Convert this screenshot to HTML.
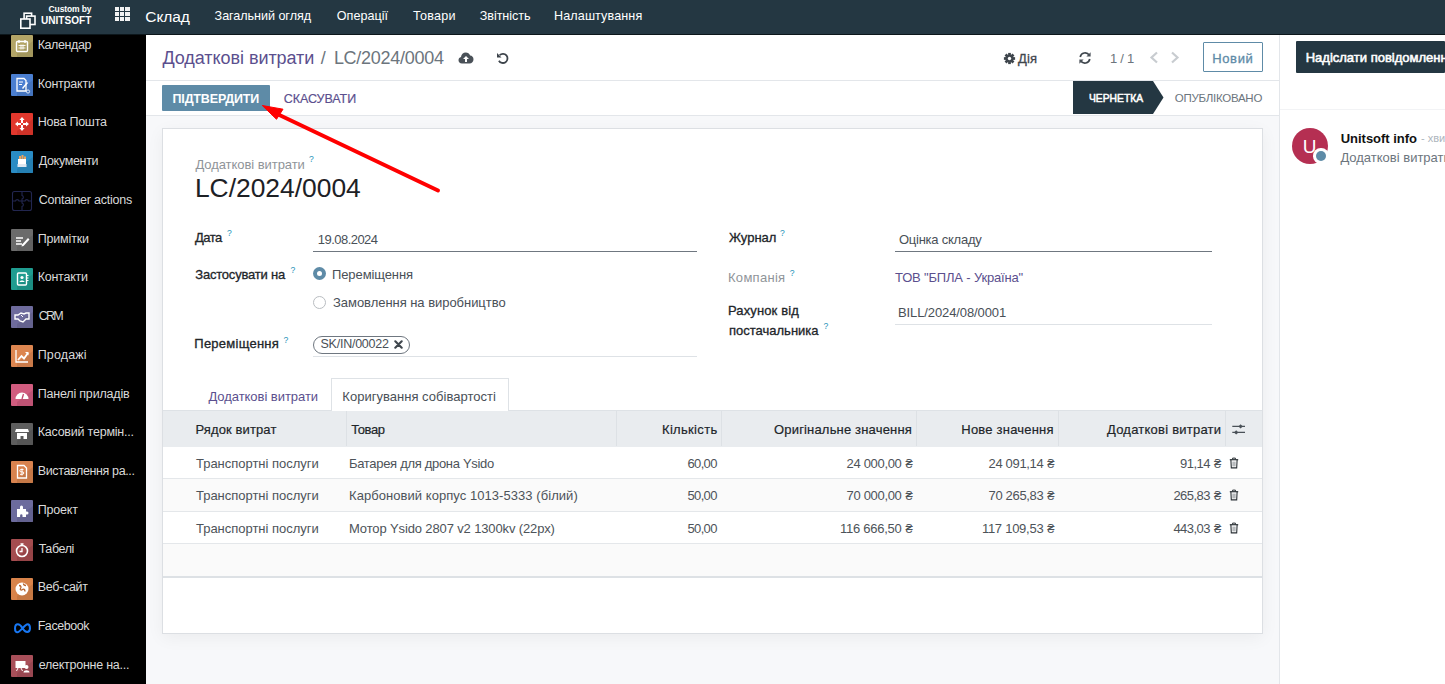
<!DOCTYPE html>
<html><head><meta charset="utf-8"><title>Odoo</title>
<style>
html,body{margin:0;padding:0;}
body{width:1445px;height:684px;overflow:hidden;position:relative;background:#fff;font-family:"Liberation Sans",sans-serif;}
body>div,body>svg{position:absolute;}
.t{white-space:pre;}
</style></head><body>
<div style="left:0px;top:0px;width:1445px;height:34px;background:#243742"></div>
<div style="left:0px;top:34px;width:1445px;height:1px;background:#0c161b"></div>
<div style="left:0px;top:35px;width:146px;height:649px;background:#000"></div>
<div style="left:146px;top:35px;width:1133px;height:81px;background:#fff"></div>
<div style="left:146px;top:80px;width:1133px;height:1px;background:#e3e6ea"></div>
<div style="left:146px;top:115px;width:1133px;height:1px;background:#e3e6ea"></div>
<div style="left:146px;top:116px;width:1133px;height:568px;background:#f7f8fa"></div>
<div style="left:1279px;top:35px;width:1px;height:649px;background:#e3e6ea"></div>
<div style="left:1280px;top:35px;width:165px;height:649px;background:#fff"></div>
<svg style="left:18px;top:10px" width="22" height="22" viewBox="0 0 22 22" fill="#243742" stroke="#fff" stroke-width="1.6"><rect x="6.1" y="3.2" width="7.5" height="7.1"/><rect x="8.6" y="6.1" width="8.4" height="8.4"/><rect x="2.8" y="9" width="9.2" height="9.2"/></svg>
<div class="t" style="left:48.60px;top:4.60px;font-size:8.50px;line-height:8.50px;color:#fff;font-weight:700;letter-spacing:-0.124px;">Custom by</div>
<div class="t" style="left:40.70px;top:15.07px;font-size:11.50px;line-height:11.50px;color:#fff;font-weight:700;transform:scaleX(0.8752);transform-origin:0 0;">UNITSOFT</div>
<div style="left:115.0px;top:7px;width:4.2px;height:4px;background:#f2f2f2"></div>
<div style="left:120.2px;top:7px;width:4.2px;height:4px;background:#f2f2f2"></div>
<div style="left:125.4px;top:7px;width:4.2px;height:4px;background:#f2f2f2"></div>
<div style="left:115.0px;top:12px;width:4.2px;height:4px;background:#f2f2f2"></div>
<div style="left:120.2px;top:12px;width:4.2px;height:4px;background:#f2f2f2"></div>
<div style="left:125.4px;top:12px;width:4.2px;height:4px;background:#f2f2f2"></div>
<div style="left:115.0px;top:17px;width:4.2px;height:4px;background:#f2f2f2"></div>
<div style="left:120.2px;top:17px;width:4.2px;height:4px;background:#f2f2f2"></div>
<div style="left:125.4px;top:17px;width:4.2px;height:4px;background:#f2f2f2"></div>
<div class="t" style="left:145.30px;top:8.68px;font-size:15.50px;line-height:15.50px;color:#fff;letter-spacing:-0.103px;">Склад</div>
<div class="t" style="left:214.60px;top:10.13px;font-size:12.60px;line-height:12.60px;color:#fff;letter-spacing:-0.054px;">Загальний огляд</div>
<div class="t" style="left:336.70px;top:10.13px;font-size:12.60px;line-height:12.60px;color:#fff;letter-spacing:0.037px;">Операції</div>
<div class="t" style="left:413.00px;top:10.13px;font-size:12.60px;line-height:12.60px;color:#fff;letter-spacing:0.226px;">Товари</div>
<div class="t" style="left:479.70px;top:10.13px;font-size:12.60px;line-height:12.60px;color:#fff;letter-spacing:-0.048px;">Звітність</div>
<div class="t" style="left:554.00px;top:10.13px;font-size:12.60px;line-height:12.60px;color:#fff;letter-spacing:0.107px;">Налаштування</div>
<svg style="left:11px;top:35.0px" width="22" height="22" viewBox="0 0 22 22"><rect width="22" height="22" rx="1" fill="#b3a567"/><path d="M6 18L22 6V22H6z" fill="#9d915a" opacity="0.7"/><rect x="5.5" y="6.5" width="11" height="10" rx="1" fill="none" stroke="#fff" stroke-width="1.4"/><path d="M8 5v3M14 5v3" stroke="#fff" stroke-width="1.4"/><path d="M7.5 10.5h7M7.5 13h7M10 9.5v5M12 9.5v5" stroke="#fff" stroke-width="0.9"/></svg>
<div class="t" style="left:37.70px;top:38.92px;font-size:12.50px;line-height:12.50px;color:#dadada;letter-spacing:-0.404px;">Календар</div>
<svg style="left:11px;top:73.75px" width="22" height="22" viewBox="0 0 22 22"><rect width="22" height="22" rx="1" fill="#4b7fd1"/><path d="M6 18L22 6V22H6z" fill="#426fb7" opacity="0.7"/><path d="M6 4.5h7l2 2V17H6z" fill="none" stroke="#fff" stroke-width="1.3"/><path d="M8 8h4M8 10.5h3" stroke="#fff" stroke-width="1"/><path d="M16.5 8.5l-5 6" stroke="#fff" stroke-width="1.4"/><circle cx="17" cy="17.5" r="1.6" fill="none" stroke="#fff" stroke-width="0.8"/></svg>
<div class="t" style="left:37.70px;top:77.67px;font-size:12.50px;line-height:12.50px;color:#dadada;letter-spacing:-0.237px;">Контракти</div>
<svg style="left:11px;top:112.5px" width="22" height="22" viewBox="0 0 22 22"><rect width="22" height="22" rx="1" fill="#e2382d"/><path d="M6 18L22 6V22H6z" fill="#c63127" opacity="0.7"/><path d="M11 4l2.6 3h-1.6v3H10V7H8.4zM11 18l-2.6-3H10v-3h2v3h1.6zM4 11l3-2.6v1.6h3v2H7v1.6zM18 11l-3 2.6V12h-3v-2h3V8.4z" fill="#fff"/></svg>
<div class="t" style="left:37.70px;top:116.42px;font-size:12.50px;line-height:12.50px;color:#dadada;letter-spacing:-0.239px;">Нова Пошта</div>
<svg style="left:11px;top:151.25px" width="22" height="22" viewBox="0 0 22 22"><rect width="22" height="22" rx="1" fill="#2a8cc4"/><path d="M6 18L22 6V22H6z" fill="#247bac" opacity="0.7"/><path d="M7 8h8v7H7z" fill="#fff"/><path d="M8 5h2v3H8zM10.5 4h2v4h-2zM13 5.5h2V8h-2z" fill="#f0a35a"/><path d="M6.5 13h9v3h-9z" fill="#dfe7f0"/></svg>
<div class="t" style="left:38.70px;top:155.17px;font-size:12.50px;line-height:12.50px;color:#dadada;letter-spacing:-0.319px;">Документи</div>
<svg style="left:11px;top:190.0px" width="22" height="22" viewBox="0 0 22 22" fill="none" stroke="#22264f" stroke-width="1.1"><rect x="1.5" y="1.5" width="19" height="19" rx="2"/><path d="M11 1.5v4a1.8 1.8 0 0 1 0 3.5V11h-3a1.8 1.8 0 0 0-3.5 0H1.5M11 20.5v-4a1.8 1.8 0 0 0 0-3.5V11h3a1.8 1.8 0 0 1 3.5 0h3"/></svg>
<div class="t" style="left:38.70px;top:193.92px;font-size:12.50px;line-height:12.50px;color:#dadada;letter-spacing:-0.239px;">Container actions</div>
<svg style="left:11px;top:228.75px" width="22" height="22" viewBox="0 0 22 22"><rect width="22" height="22" rx="1" fill="#6b6b6b"/><path d="M6 18L22 6V22H6z" fill="#5e5e5e" opacity="0.7"/><path d="M5 9h7M5 12h5M5 15h6" stroke="#fff" stroke-width="1.6"/><path d="M11 15.5l6-6.5 1.5 1.5-6 6.5-2 .5z" fill="#fff"/></svg>
<div class="t" style="left:37.70px;top:232.67px;font-size:12.50px;line-height:12.50px;color:#dadada;letter-spacing:-0.169px;">Примітки</div>
<svg style="left:11px;top:267.5px" width="22" height="22" viewBox="0 0 22 22"><rect width="22" height="22" rx="1" fill="#1f9c90"/><path d="M6 18L22 6V22H6z" fill="#1b897e" opacity="0.7"/><rect x="6.5" y="5" width="9" height="12" rx="1" fill="none" stroke="#fff" stroke-width="1.4"/><circle cx="11" cy="9.5" r="1.6" fill="#fff"/><path d="M8.5 14c0-2 5-2 5 0" fill="#fff"/><path d="M16 7.5h1.5M16 10h1.5M16 12.5h1.5" stroke="#fff"/></svg>
<div class="t" style="left:37.70px;top:271.42px;font-size:12.50px;line-height:12.50px;color:#dadada;letter-spacing:-0.244px;">Контакти</div>
<svg style="left:11px;top:306.25px" width="22" height="22" viewBox="0 0 22 22"><rect width="22" height="22" rx="1" fill="#6e6b9c"/><path d="M6 18L22 6V22H6z" fill="#605e89" opacity="0.7"/><path d="M4 9h3l3-2 3 1 2-1h3v6h-3l-3 3-3-1-2-2H4z" fill="none" stroke="#fff" stroke-width="1.4"/><path d="M10 9l2 2" stroke="#fff"/></svg>
<div class="t" style="left:38.70px;top:310.17px;font-size:12.50px;line-height:12.50px;color:#dadada;letter-spacing:-1.777px;">CRM</div>
<svg style="left:11px;top:345.0px" width="22" height="22" viewBox="0 0 22 22"><rect width="22" height="22" rx="1" fill="#dd8650"/><path d="M6 18L22 6V22H6z" fill="#c27546" opacity="0.7"/><path d="M5 5v12h12" fill="none" stroke="#fff" stroke-width="1.3"/><path d="M7 15l3.5-4 2.5 2.5L17 8" fill="none" stroke="#fff" stroke-width="1.8"/><path d="M14 7h3.5v3.5z" fill="#fff"/></svg>
<div class="t" style="left:37.70px;top:348.92px;font-size:12.50px;line-height:12.50px;color:#dadada;letter-spacing:0.147px;">Продажі</div>
<svg style="left:11px;top:383.75px" width="22" height="22" viewBox="0 0 22 22"><rect width="22" height="22" rx="1" fill="#d15c7f"/><path d="M6 18L22 6V22H6z" fill="#b7506f" opacity="0.7"/><path d="M4.5 15a6.5 6.5 0 0 1 13 0z" fill="#fff"/><path d="M11 15l1.5-5" stroke="#c04a6d" stroke-width="1.3"/></svg>
<div class="t" style="left:37.70px;top:387.67px;font-size:12.50px;line-height:12.50px;color:#dadada;letter-spacing:-0.189px;">Панелі приладів</div>
<svg style="left:11px;top:422.5px" width="22" height="22" viewBox="0 0 22 22"><rect width="22" height="22" rx="1" fill="#5e5e5e"/><path d="M6 18L22 6V22H6z" fill="#525252" opacity="0.7"/><path d="M5 6h12l1 3H4z" fill="#fff"/><path d="M6 10h10v6h-3.5v-3h-3v3H6z" fill="#fff"/></svg>
<div class="t" style="left:37.70px;top:426.42px;font-size:12.50px;line-height:12.50px;color:#dadada;letter-spacing:-0.223px;">Касовий термін...</div>
<svg style="left:11px;top:461.25px" width="22" height="22" viewBox="0 0 22 22"><rect width="22" height="22" rx="1" fill="#d8834f"/><path d="M6 18L22 6V22H6z" fill="#be7345" opacity="0.7"/><path d="M6.5 4.5h6.5l2.5 2.5v10h-9z" fill="none" stroke="#fff" stroke-width="1.3"/><path d="M12.5 8.5h-2.5a1.2 1.2 0 0 0 0 2.4h1.5a1.2 1.2 0 0 1 0 2.4H9M11 7.5v7" fill="none" stroke="#fff" stroke-width="1"/></svg>
<div class="t" style="left:37.70px;top:465.17px;font-size:12.50px;line-height:12.50px;color:#dadada;letter-spacing:-0.363px;">Виставлення ра...</div>
<svg style="left:11px;top:500.0px" width="22" height="22" viewBox="0 0 22 22"><rect width="22" height="22" rx="1" fill="#6c6b9d"/><path d="M6 18L22 6V22H6z" fill="#5f5e8a" opacity="0.7"/><path d="M6 9h3V7a1.5 1.5 0 0 1 3 0v2h3v2.5h1a1.5 1.5 0 0 1 0 3h-1V17h-3.5v-1.5a1.2 1.2 0 0 0-2.4 0V17H6z" fill="#fff"/></svg>
<div class="t" style="left:37.70px;top:503.92px;font-size:12.50px;line-height:12.50px;color:#dadada;letter-spacing:-0.170px;">Проект</div>
<svg style="left:11px;top:538.75px" width="22" height="22" viewBox="0 0 22 22"><rect width="22" height="22" rx="1" fill="#a44c4f"/><path d="M6 18L22 6V22H6z" fill="#904245" opacity="0.7"/><circle cx="11" cy="12" r="5.5" fill="none" stroke="#fff" stroke-width="1.6"/><path d="M9.5 5h3M11 5v1.5M11 9v3.5h-2.5" fill="none" stroke="#fff" stroke-width="1.3"/></svg>
<div class="t" style="left:38.70px;top:542.67px;font-size:12.50px;line-height:12.50px;color:#dadada;letter-spacing:-0.395px;">Табелі</div>
<svg style="left:11px;top:577.5px" width="22" height="22" viewBox="0 0 22 22"><rect width="22" height="22" rx="1" fill="#d8834a"/><path d="M6 18L22 6V22H6z" fill="#be7341" opacity="0.7"/><circle cx="11" cy="11" r="6.5" fill="#fff"/><path d="M8 7.5c2 0 2.5 1.5 1.5 3s1 2 2 1 2.5 0 2.5 2M12.5 5.5c0 1.5 1.5 2 2.5 2" fill="none" stroke="#b8652f" stroke-width="1.3"/></svg>
<div class="t" style="left:37.70px;top:581.42px;font-size:12.50px;line-height:12.50px;color:#dadada;letter-spacing:-0.294px;">Веб-сайт</div>
<svg style="left:13.5px;top:622.75px" width="17" height="11" viewBox="0 0 20 12.5" fill="none" stroke="#1877f2" stroke-width="2.4"><path d="M10 6C8 2.5 6.2 1.3 4.5 1.3 2.6 1.3 1.2 3.4 1.2 6.3c0 2.7 1.2 4.4 2.9 4.4 1.8 0 3.6-2.2 5.9-4.7s4-4.7 5.9-4.7c1.7 0 2.9 2 2.9 4.7 0 2.9-1.4 4.4-3.3 4.4-1.7 0-3.5-1.2-5.5-4.4z"/></svg>
<div class="t" style="left:37.70px;top:620.17px;font-size:12.50px;line-height:12.50px;color:#dadada;letter-spacing:-0.449px;">Facebook</div>
<svg style="left:11px;top:655.0px" width="22" height="22" viewBox="0 0 22 22"><rect width="22" height="22" rx="1" fill="#a84f59"/><path d="M6 18L22 6V22H6z" fill="#93454e" opacity="0.7"/><path d="M4.5 6h10v7h-10z" fill="#fff"/><circle cx="15.5" cy="12" r="2" fill="#fff"/><path d="M12.5 17.5c0-3 6-3 6 0z" fill="#fff"/><path d="M7 13l-1.5 3M10 13l1.5 3" stroke="#fff"/></svg>
<div class="t" style="left:38.70px;top:658.92px;font-size:12.50px;line-height:12.50px;color:#dadada;letter-spacing:-0.250px;">електронне на...</div>
<div class="t" style="left:162.40px;top:48.56px;font-size:18.00px;line-height:18.00px;color:#5b4f8e;letter-spacing:-0.053px;">Додаткові витрати</div>
<div class="t" style="left:320.80px;top:48.56px;font-size:18.00px;line-height:18.00px;color:#6c757d;">/</div>
<div class="t" style="left:333.90px;top:48.56px;font-size:18.00px;line-height:18.00px;color:#6c757d;letter-spacing:-0.281px;">LC/2024/0004</div>
<svg style="left:458px;top:51px" width="16" height="13" viewBox="0 0 16 13"><path fill="#4a5158" d="M4 12.5C1.8 12.5 0.5 11 0.5 9.2 0.5 7.6 1.6 6.4 3 6.1 3.2 3.6 5.2 1.5 7.8 1.5c2 0 3.6 1.2 4.3 2.9 2 .1 3.4 1.7 3.4 3.8 0 2.4-1.7 4.3-4 4.3z"/><path fill="#fff" d="M8 5l3 3H9v3H7V8H5z"/></svg>
<svg style="left:495px;top:51px" width="15" height="15" viewBox="0 0 15 15" fill="none"><path d="M4.65 4.15A4.6 4.6 0 1 1 3.92 9.7" stroke="#3d444b" stroke-width="1.8"/><path d="M2 2.1V6.6H6.5z" fill="#3d444b"/></svg>
<svg style="left:1003px;top:52px" width="13" height="13" viewBox="-6.5 -6.5 13 13"><g fill="#3f464d"><rect x="-1.35" y="-5.6" width="2.7" height="3" transform="rotate(0)"/><rect x="-1.35" y="-5.6" width="2.7" height="3" transform="rotate(45)"/><rect x="-1.35" y="-5.6" width="2.7" height="3" transform="rotate(90)"/><rect x="-1.35" y="-5.6" width="2.7" height="3" transform="rotate(135)"/><rect x="-1.35" y="-5.6" width="2.7" height="3" transform="rotate(180)"/><rect x="-1.35" y="-5.6" width="2.7" height="3" transform="rotate(225)"/><rect x="-1.35" y="-5.6" width="2.7" height="3" transform="rotate(270)"/><rect x="-1.35" y="-5.6" width="2.7" height="3" transform="rotate(315)"/><circle r="4.1"/></g><circle r="1.7" fill="#fff"/></svg>
<div class="t" style="left:1018.00px;top:51.90px;font-size:13.00px;line-height:13.00px;color:#3f464d;-webkit-text-stroke:0.3px #3f464d;letter-spacing:0.154px;">Дія</div>
<svg style="left:1078px;top:50.5px" width="14" height="14" viewBox="0 0 14 14" fill="none" stroke="#3f464d" stroke-width="1.7"><path d="M2.2 6A5 5 0 0 1 11.3 4.2"/><path d="M11.8 8A5 5 0 0 1 2.7 9.8"/><path d="M12.6 1.2V5.4H8.4z" fill="#4a5158" stroke="none"/><path d="M1.4 12.8V8.6H5.6z" fill="#4a5158" stroke="none"/></svg>
<div class="t" style="left:1110.00px;top:52.00px;font-size:13.00px;line-height:13.00px;color:#6c757d;letter-spacing:-0.266px;">1 / 1</div>
<svg style="left:1148px;top:51px" width="32" height="13" viewBox="0 0 32 13" fill="none" stroke="#c8ccd0" stroke-width="2.2"><path d="M9 1.5L3.5 6.5 9 11.5"/><path d="M24 1.5L29.5 6.5 24 11.5"/></svg>
<div style="left:1203px;top:42px;width:60px;height:30px;border:1px solid #5e8ba7;box-sizing:border-box;border-radius:1px"></div>
<div class="t" style="left:1212.20px;top:51.90px;font-size:13.00px;line-height:13.00px;color:#5e8ba7;-webkit-text-stroke:0.3px #5e8ba7;letter-spacing:0.653px;">Новий</div>
<div style="left:162px;top:85px;width:108px;height:26px;background:#5e8ba7;border-radius:1px"></div>
<div class="t" style="left:172.50px;top:92.52px;font-size:12.50px;line-height:12.50px;color:#fff;font-weight:700;letter-spacing:-0.164px;">ПІДТВЕРДИТИ</div>
<div class="t" style="left:283.70px;top:92.52px;font-size:12.50px;line-height:12.50px;color:#5b4f8e;-webkit-text-stroke:0.18px #5b4f8e;letter-spacing:-0.043px;">СКАСУВАТИ</div>
<svg style="left:1073px;top:81px" width="91" height="33" viewBox="0 0 91 33"><path fill="#243742" d="M0 0H80L90.5 16.5 80 33H0z"/></svg>
<div class="t" style="left:1088.60px;top:92.87px;font-size:11.50px;line-height:11.50px;color:#fff;-webkit-text-stroke:0.55px #fff;transform:scaleX(0.8961);transform-origin:0 0;">ЧЕРНЕТКА</div>
<div class="t" style="left:1174.80px;top:92.87px;font-size:11.50px;line-height:11.50px;color:#6c757d;letter-spacing:-0.271px;">ОПУБЛІКОВАНО</div>
<div style="left:162px;top:128px;width:1101px;height:506px;background:#fff;border:1px solid #dcdfe3;box-sizing:border-box;box-shadow:0 4px 16px rgba(0,0,0,.05)"></div>
<div class="t" style="left:195.40px;top:157.80px;font-size:13.00px;line-height:13.00px;color:#8f9499;letter-spacing:-0.056px;">Додаткові витрати</div>
<div class="t" style="left:309.00px;top:155.42px;font-size:8.60px;line-height:8.60px;color:#2592b8;">?</div>
<div class="t" style="left:194.90px;top:175.34px;font-size:26.42px;line-height:26.42px;color:#1d2125;">LC/2024/0004</div>
<div class="t" style="left:195.00px;top:230.80px;font-size:13.00px;line-height:13.00px;color:#212529;-webkit-text-stroke:0.3px #212529;letter-spacing:-0.519px;">Дата</div>
<div class="t" style="left:227.00px;top:229.42px;font-size:8.60px;line-height:8.60px;color:#2592b8;">?</div>
<div class="t" style="left:317.80px;top:232.80px;font-size:13.00px;line-height:13.00px;color:#495057;letter-spacing:-0.537px;">19.08.2024</div>
<div style="left:313px;top:251px;width:384px;height:1px;background:#6f7780"></div>
<div class="t" style="left:195.30px;top:267.50px;font-size:13.00px;line-height:13.00px;color:#212529;-webkit-text-stroke:0.3px #212529;letter-spacing:-0.210px;">Застосувати на</div>
<div class="t" style="left:290.60px;top:266.42px;font-size:8.60px;line-height:8.60px;color:#2592b8;">?</div>
<div style="left:313px;top:266.5px;width:13px;height:13px;border-radius:50%;background:#5e8ba7;box-sizing:border-box"></div>
<div style="left:317px;top:270.5px;width:5px;height:5px;border-radius:50%;background:#fff"></div>
<div class="t" style="left:332.00px;top:267.50px;font-size:13.00px;line-height:13.00px;color:#495057;letter-spacing:-0.100px;">Переміщення</div>
<div style="left:313px;top:295.5px;width:13px;height:13px;border-radius:50%;border:1px solid #b9bdc1;background:#fff;box-sizing:border-box"></div>
<div class="t" style="left:333.00px;top:296.20px;font-size:13.00px;line-height:13.00px;color:#495057;letter-spacing:-0.041px;">Замовлення на виробництво</div>
<div class="t" style="left:194.30px;top:337.00px;font-size:13.00px;line-height:13.00px;color:#212529;-webkit-text-stroke:0.3px #212529;letter-spacing:0.250px;">Переміщення</div>
<div class="t" style="left:283.50px;top:335.92px;font-size:8.60px;line-height:8.60px;color:#2592b8;">?</div>
<div style="left:313px;top:335.5px;width:96.5px;height:18px;border:1px solid #6f7780;border-radius:9px;box-sizing:border-box"></div>
<div class="t" style="left:320.50px;top:338.02px;font-size:12.50px;line-height:12.50px;color:#495057;letter-spacing:-0.243px;">SK/IN/00022</div>
<svg style="left:393.5px;top:339.5px" width="9" height="9" viewBox="0 0 9 9" stroke="#3f464d" stroke-width="2.1" stroke-linecap="round"><path d="M1.3 1.3L7.7 7.7M7.7 1.3L1.3 7.7"/></svg>
<div style="left:313px;top:356px;width:384px;height:1px;background:#dee2e6"></div>
<div class="t" style="left:729.00px;top:230.80px;font-size:13.00px;line-height:13.00px;color:#212529;-webkit-text-stroke:0.3px #212529;letter-spacing:-0.010px;">Журнал</div>
<div class="t" style="left:780.00px;top:229.42px;font-size:8.60px;line-height:8.60px;color:#2592b8;">?</div>
<div class="t" style="left:898.90px;top:232.90px;font-size:13.00px;line-height:13.00px;color:#495057;letter-spacing:-0.231px;">Оцінка складу</div>
<div style="left:895px;top:251px;width:317px;height:1px;background:#6f7780"></div>
<div class="t" style="left:728.00px;top:270.90px;font-size:13.00px;line-height:13.00px;color:#8f9499;letter-spacing:0.289px;">Компанія</div>
<div class="t" style="left:789.70px;top:268.92px;font-size:8.60px;line-height:8.60px;color:#2592b8;">?</div>
<div class="t" style="left:895.00px;top:271.30px;font-size:13.00px;line-height:13.00px;color:#5b4f8e;letter-spacing:-0.176px;">ТОВ &quot;БПЛА - Україна&quot;</div>
<div class="t" style="left:728.00px;top:304.00px;font-size:13.00px;line-height:13.00px;color:#212529;-webkit-text-stroke:0.3px #212529;letter-spacing:0.123px;">Рахунок від</div>
<div class="t" style="left:729.00px;top:323.60px;font-size:13.00px;line-height:13.00px;color:#212529;-webkit-text-stroke:0.3px #212529;">постачальника</div>
<div class="t" style="left:823.50px;top:322.42px;font-size:8.60px;line-height:8.60px;color:#2592b8;">?</div>
<div class="t" style="left:898.00px;top:306.00px;font-size:13.00px;line-height:13.00px;color:#495057;letter-spacing:-0.103px;">BILL/2024/08/0001</div>
<div style="left:895px;top:323.5px;width:317px;height:1px;background:#dee2e6"></div>
<div style="left:163px;top:410px;width:1099px;height:1px;background:#dee2e6"></div>
<div style="left:330.5px;top:377.5px;width:178.5px;height:34px;background:#fff;border:1px solid #dee2e6;border-bottom:none;box-sizing:border-box"></div>
<div class="t" style="left:208.40px;top:389.50px;font-size:13.00px;line-height:13.00px;color:#5b4f8e;letter-spacing:-0.044px;">Додаткові витрати</div>
<div class="t" style="left:342.30px;top:389.50px;font-size:13.00px;line-height:13.00px;color:#495057;letter-spacing:0.023px;">Коригування собівартості</div>
<div style="left:163px;top:410.5px;width:1099px;height:36px;background:#e9ecef"></div>
<div style="left:346px;top:411px;width:1px;height:35px;background:#dde1e5"></div>
<div style="left:616px;top:411px;width:1px;height:35px;background:#dde1e5"></div>
<div style="left:721px;top:411px;width:1px;height:35px;background:#dde1e5"></div>
<div style="left:916px;top:411px;width:1px;height:35px;background:#dde1e5"></div>
<div style="left:1058px;top:411px;width:1px;height:35px;background:#dde1e5"></div>
<div style="left:1225px;top:411px;width:1px;height:35px;background:#dde1e5"></div>
<div class="t" style="left:195.50px;top:422.80px;font-size:13.00px;line-height:13.00px;color:#212529;-webkit-text-stroke:0.18px #212529;letter-spacing:0.110px;">Рядок витрат</div>
<div class="t" style="left:351.20px;top:422.80px;font-size:13.00px;line-height:13.00px;color:#212529;-webkit-text-stroke:0.18px #212529;letter-spacing:-0.386px;">Товар</div>
<div class="t" style="left:662.00px;top:422.80px;font-size:13.00px;line-height:13.00px;color:#212529;-webkit-text-stroke:0.18px #212529;letter-spacing:0.319px;">Кількість</div>
<div class="t" style="left:774.00px;top:422.80px;font-size:13.00px;line-height:13.00px;color:#212529;-webkit-text-stroke:0.18px #212529;letter-spacing:0.175px;">Оригінальне значення</div>
<div class="t" style="left:961.30px;top:422.80px;font-size:13.00px;line-height:13.00px;color:#212529;-webkit-text-stroke:0.18px #212529;letter-spacing:0.211px;">Нове значення</div>
<div class="t" style="left:1107.00px;top:422.80px;font-size:13.00px;line-height:13.00px;color:#212529;-webkit-text-stroke:0.18px #212529;letter-spacing:0.231px;">Додаткові витрати</div>
<svg style="left:1231px;top:421px" width="16" height="14" viewBox="0 0 16 14" fill="#4a5158" stroke="#4a5158" stroke-width="1.2"><path d="M1.3 5.4H14M1.3 11.4H14"/><path d="M9.6 3.2l2.2 2.2-2.2 2.2-2.2-2.2z" stroke="none"/><path d="M5.2 9.2l2.2 2.2-2.2 2.2-2.2-2.2z" stroke="none"/></svg>
<div style="left:163px;top:478.5px;width:1099px;height:32.5px;background:#fafafa"></div>
<div style="left:163px;top:543.5px;width:1099px;height:33px;background:#fafafa"></div>
<div style="left:163px;top:478px;width:1099px;height:1px;background:#e4e7ea"></div>
<div style="left:163px;top:511px;width:1099px;height:1px;background:#e4e7ea"></div>
<div style="left:163px;top:543px;width:1099px;height:1px;background:#e4e7ea"></div>
<div style="left:163px;top:576px;width:1099px;height:1.6px;background:#dde1e5"></div>
<div class="t" style="left:196.00px;top:457.20px;font-size:13.00px;line-height:13.00px;color:#4d5359;letter-spacing:-0.022px;">Транспортні послуги</div>
<div class="t" style="left:349.00px;top:457.20px;font-size:13.00px;line-height:13.00px;color:#4d5359;letter-spacing:-0.309px;">Батарея для дрона Ysido</div>
<div class="t" style="left:687.50px;top:457.20px;font-size:13.00px;line-height:13.00px;color:#4d5359;letter-spacing:-0.650px;">60,00</div>
<div class="t" style="left:846.60px;top:457.20px;font-size:13.00px;line-height:13.00px;color:#4d5359;letter-spacing:-0.325px;">24 000,00</div>
<div class="t" style="left:905.40px;top:457.20px;font-size:13.00px;line-height:13.00px;color:#4d5359;">₴</div>
<div class="t" style="left:988.60px;top:457.20px;font-size:13.00px;line-height:13.00px;color:#4d5359;letter-spacing:-0.350px;">24 091,14</div>
<div class="t" style="left:1047.20px;top:457.20px;font-size:13.00px;line-height:13.00px;color:#4d5359;">₴</div>
<div class="t" style="left:1180.00px;top:457.20px;font-size:13.00px;line-height:13.00px;color:#4d5359;letter-spacing:-0.525px;">91,14</div>
<div class="t" style="left:1214.00px;top:457.20px;font-size:13.00px;line-height:13.00px;color:#4d5359;">₴</div>
<svg style="left:1228.5px;top:457.3px" width="10" height="12" viewBox="0 0 10 12" fill="none" stroke="#2b3136"><path d="M3.6 2.4V1.1H6.4V2.4" stroke-width="1"/><path d="M0.8 2.7H9.2" stroke-width="1.2"/><path d="M1.9 3L2.3 10.9H7.7L8.1 3" stroke-width="1.1"/><path d="M4.1 4.6V9.4M5.9 4.6V9.4" stroke-width="0.8" stroke="#6b7177"/></svg>
<div class="t" style="left:196.00px;top:489.00px;font-size:13.00px;line-height:13.00px;color:#4d5359;letter-spacing:-0.022px;">Транспортні послуги</div>
<div class="t" style="left:349.00px;top:489.00px;font-size:13.00px;line-height:13.00px;color:#4d5359;letter-spacing:0.056px;">Карбоновий корпус 1013-5333 (білий)</div>
<div class="t" style="left:687.50px;top:489.00px;font-size:13.00px;line-height:13.00px;color:#4d5359;letter-spacing:-0.650px;">50,00</div>
<div class="t" style="left:846.60px;top:489.00px;font-size:13.00px;line-height:13.00px;color:#4d5359;letter-spacing:-0.325px;">70 000,00</div>
<div class="t" style="left:905.40px;top:489.00px;font-size:13.00px;line-height:13.00px;color:#4d5359;">₴</div>
<div class="t" style="left:988.60px;top:489.00px;font-size:13.00px;line-height:13.00px;color:#4d5359;letter-spacing:-0.350px;">70 265,83</div>
<div class="t" style="left:1047.20px;top:489.00px;font-size:13.00px;line-height:13.00px;color:#4d5359;">₴</div>
<div class="t" style="left:1173.40px;top:489.00px;font-size:13.00px;line-height:13.00px;color:#4d5359;letter-spacing:-0.546px;">265,83</div>
<div class="t" style="left:1214.00px;top:489.00px;font-size:13.00px;line-height:13.00px;color:#4d5359;">₴</div>
<svg style="left:1228.5px;top:489.1px" width="10" height="12" viewBox="0 0 10 12" fill="none" stroke="#2b3136"><path d="M3.6 2.4V1.1H6.4V2.4" stroke-width="1"/><path d="M0.8 2.7H9.2" stroke-width="1.2"/><path d="M1.9 3L2.3 10.9H7.7L8.1 3" stroke-width="1.1"/><path d="M4.1 4.6V9.4M5.9 4.6V9.4" stroke-width="0.8" stroke="#6b7177"/></svg>
<div class="t" style="left:196.00px;top:521.90px;font-size:13.00px;line-height:13.00px;color:#4d5359;letter-spacing:-0.022px;">Транспортні послуги</div>
<div class="t" style="left:349.00px;top:521.90px;font-size:13.00px;line-height:13.00px;color:#4d5359;letter-spacing:-0.133px;">Мотор Ysido 2807 v2 1300kv (22px)</div>
<div class="t" style="left:687.50px;top:521.90px;font-size:13.00px;line-height:13.00px;color:#4d5359;letter-spacing:-0.650px;">50,00</div>
<div class="t" style="left:840.00px;top:521.90px;font-size:13.00px;line-height:13.00px;color:#4d5359;letter-spacing:-0.252px;">116 666,50</div>
<div class="t" style="left:905.40px;top:521.90px;font-size:13.00px;line-height:13.00px;color:#4d5359;">₴</div>
<div class="t" style="left:981.90px;top:521.90px;font-size:13.00px;line-height:13.00px;color:#4d5359;letter-spacing:-0.263px;">117 109,53</div>
<div class="t" style="left:1047.20px;top:521.90px;font-size:13.00px;line-height:13.00px;color:#4d5359;">₴</div>
<div class="t" style="left:1173.40px;top:521.90px;font-size:13.00px;line-height:13.00px;color:#4d5359;letter-spacing:-0.546px;">443,03</div>
<div class="t" style="left:1214.00px;top:521.90px;font-size:13.00px;line-height:13.00px;color:#4d5359;">₴</div>
<svg style="left:1228.5px;top:522.0px" width="10" height="12" viewBox="0 0 10 12" fill="none" stroke="#2b3136"><path d="M3.6 2.4V1.1H6.4V2.4" stroke-width="1"/><path d="M0.8 2.7H9.2" stroke-width="1.2"/><path d="M1.9 3L2.3 10.9H7.7L8.1 3" stroke-width="1.1"/><path d="M4.1 4.6V9.4M5.9 4.6V9.4" stroke-width="0.8" stroke="#6b7177"/></svg>
<div style="left:1296px;top:41px;width:149px;height:32px;background:#243742;border-radius:1px"></div>
<div class="t" style="left:1305.70px;top:51.00px;font-size:13.00px;line-height:13.00px;color:#fff;-webkit-text-stroke:0.55px #fff;">Надіслати повідомлення</div>
<div style="left:1280px;top:109px;width:165px;height:1px;background:#f2f3f5"></div>
<div style="left:1292px;top:128px;width:36px;height:36px;border-radius:50%;background:#b52f52"></div>
<div class="t" style="left:1302.80px;top:137.12px;font-size:19.00px;line-height:19.00px;color:#fff;">U</div>
<div style="left:1313px;top:148.3px;width:15.5px;height:15.5px;border-radius:50%;background:#fff"></div>
<div style="left:1315.5px;top:150.7px;width:10.6px;height:10.6px;border-radius:50%;background:#5e8ba7"></div>
<div class="t" style="left:1340.70px;top:131.70px;font-size:13.00px;line-height:13.00px;color:#111;font-weight:700;letter-spacing:-0.016px;">Unitsoft info</div>
<div class="t" style="left:1421.00px;top:133.39px;font-size:11.00px;line-height:11.00px;color:#adb5bd;">- хвилину тому</div>
<div class="t" style="left:1340.40px;top:151.00px;font-size:13.00px;line-height:13.00px;color:#6c757d;">Додаткові витрати створено</div>
<svg style="left:0;top:0" width="1445" height="684" viewBox="0 0 1445 684"><path d="M438 190.5L272 111.5" stroke="#ff0000" stroke-width="4" stroke-linecap="round"/><path d="M262.3 105.5L283 109.2 276.5 119.3z" fill="#ff0000" stroke="#ff0000" stroke-width="1" stroke-linejoin="round"/></svg>
</body></html>
